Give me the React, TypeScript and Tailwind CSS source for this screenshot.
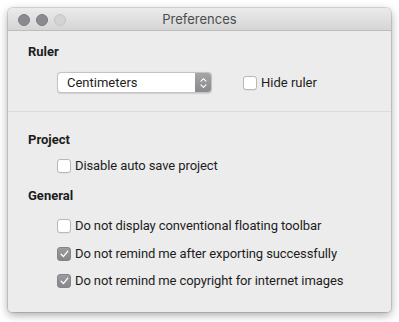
import React from 'react'

function Box({ checked }: { checked?: boolean }) {
  if (checked) {
    return (
      <span className="flex h-[14px] w-[14px] shrink-0 items-center justify-center rounded-[3px] border border-[#858589] bg-gradient-to-b from-[#9c9ca0] to-[#86868a]">
        <svg width="9" height="8" viewBox="0 0 9 8" fill="none">
          <path d="M1.2 4.3 L3.4 6.6 L7.8 1.2" stroke="#fff" strokeWidth="1.3" strokeLinecap="round" strokeLinejoin="round" />
        </svg>
      </span>
    )
  }
  return <span className="h-[14px] w-[14px] shrink-0 rounded-[3px] border border-[#b8b8b8] bg-white shadow-[0_0.5px_0.5px_rgba(0,0,0,0.08)]" />
}

function Row({ label, checked }: { label: string; checked?: boolean }) {
  return (
    <div className="flex h-4 items-center gap-[4px] pl-[29px]">
      <Box checked={checked} />
      <span className="tracking-[-0.1px]">{label}</span>
    </div>
  )
}

export default function App() {
  return (
    <div className="h-[322px] w-[399px] bg-white p-[8px] pb-[10px] font-['Roboto','Liberation_Sans',sans-serif] text-[13px] leading-4 text-[#1d1d1d]">
      <div className="flex h-[304px] flex-col overflow-hidden rounded-t-[5px] rounded-b-[4px] bg-[#ececec] shadow-[0_3px_10px_rgba(0,0,0,0.35),0_0_0_1px_rgba(0,0,0,0.12)]">
        <div className="relative flex h-[23px] shrink-0 items-center justify-center border-b border-[#bdbdbd] bg-gradient-to-b from-[#ebebeb] to-[#d5d5d5]">
          <div className="absolute left-[10px] top-[6px] flex gap-[6px]">
            <span className="h-[12px] w-[12px] rounded-full border border-[#7d7c80] bg-[#8b8a8f]" />
            <span className="h-[12px] w-[12px] rounded-full border border-[#7d7c80] bg-[#8b8a8f]" />
            <span className="h-[12px] w-[12px] rounded-full border border-[#c6c6c6] bg-[#d3d3d3]" />
          </div>
          <span className="font-['Inter',sans-serif] text-[13px] text-[#4d4d4d]">Preferences</span>
        </div>

        <div className="px-[20px] pt-[13px]">
          <div className="font-bold">Ruler</div>
          <div className="mt-[12px] flex items-center pl-[29px]">
            <div className="flex h-[21px] w-[155px] overflow-hidden rounded-[4px] border border-[#c3c3c3] bg-white shadow-[0_0.5px_1px_rgba(0,0,0,0.12)]">
              <span className="flex flex-1 items-center pl-[9px]">Centimeters</span>
              <span className="flex w-[16px] items-center justify-center bg-gradient-to-b from-[#a6a6a9] to-[#8a8a8d]">
                <svg width="7" height="12" viewBox="0 0 7 12" fill="none">
                  <path d="M1 4.2 L3.5 1.7 L6 4.2 M1 7.8 L3.5 10.3 L6 7.8" stroke="#fff" strokeWidth="1.2" strokeLinecap="round" strokeLinejoin="round" />
                </svg>
              </span>
            </div>
            <div className="ml-[31px] flex items-center gap-[4px]">
              <Box />
              <span>Hide ruler</span>
            </div>
          </div>
        </div>

        <div className="mt-[18px] h-px bg-[#dcdcdc]" />

        <div className="px-[20px] pt-[20px]">
          <div className="font-bold">Project</div>
          <div className="mt-[10px]">
            <Row label="Disable auto save project" />
          </div>
          <div className="mt-[14px] font-bold">General</div>
          <div className="mt-[14px] flex flex-col gap-[11.5px]">
            <Row label="Do not display conventional floating toolbar" />
            <Row label="Do not remind me after exporting successfully" checked />
            <Row label="Do not remind me copyright for internet images" checked />
          </div>
        </div>
      </div>
    </div>
  )
}
